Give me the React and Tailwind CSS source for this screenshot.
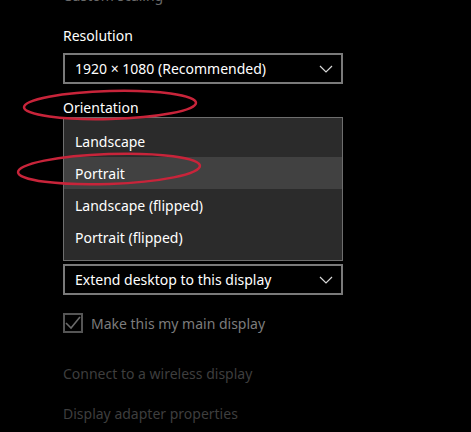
const FONT = { fontFamily: '"Segoe UI", "Noto Sans", "Open Sans", sans-serif' }

const ORIENTATIONS = ['Landscape', 'Portrait', 'Landscape (flipped)', 'Portrait (flipped)']

function Chevron() {
  return (
    <svg width="14" height="8" viewBox="0 0 14 8" fill="none" className="shrink-0">
      <path d="M1 1 L7 7 L13 1" stroke="#d8d8d8" strokeWidth="1.2" />
    </svg>
  )
}

function Select({ value }) {
  return (
    <div className="flex h-[31px] w-[280px] items-center justify-between border-2 border-[#7a7a7a] pl-[10px] pr-[8px]">
      <span className="text-[14px] text-white">{value}</span>
      <Chevron />
    </div>
  )
}

export default function App() {
  return (
    <div className="relative h-[432px] w-[471px] overflow-hidden bg-black" style={FONT}>
      <div className="flex flex-col pl-[63px]">
        {/* cut-off label at the very top */}
        <div className="mt-[-14px] h-[20px] text-[14px] leading-[20px] text-[#6a6a6a]">Custom scaling</div>

        <div className="mt-[20px] h-[20px] text-[14px] leading-[20px] text-white">Resolution</div>
        <div className="mt-[7px]">
          <Select value="1920 × 1080 (Recommended)" />
        </div>

        <div className="mt-[14px] h-[19px] text-[14px] leading-[20px] text-white">Orientation</div>

        {/* open dropdown list */}
        <div className="w-[280px] border border-[#6e6e6e] bg-[#2b2b2b] py-[7px]">
          {ORIENTATIONS.map((o) => (
            <div
              key={o}
              className={`flex h-[32px] items-center pl-[11px] text-[14px] text-white ${o === 'Portrait' ? 'bg-[#414141]' : ''}`}
            >
              {o}
            </div>
          ))}
        </div>

        <div className="mt-[3px]">
          <Select value="Extend desktop to this display" />
        </div>

        <div className="mt-[18px] flex h-[20px] items-center gap-[8px]">
          <div className="flex h-[20px] w-[20px] items-center justify-center border-2 border-[#555]">
            <svg width="16" height="14" viewBox="0 0 16 14" fill="none">
              <path d="M1 7 L6 12 L15 1" stroke="#6a6a6a" strokeWidth="1.6" />
            </svg>
          </div>
          <span className="text-[14px] text-[#7c7c7c]">Make this my main display</span>
        </div>

        <div className="mt-[31px] h-[20px] text-[14px] leading-[20px] text-[#3e3e3e]">Connect to a wireless display</div>
        <div className="mt-[20px] h-[20px] text-[14px] leading-[20px] text-[#3e3e3e]">Display adapter properties</div>
      </div>

      {/* red hand-drawn annotation rings */}
      <svg className="pointer-events-none absolute left-0 top-0" width="471" height="432" viewBox="0 0 471 432" fill="none">
        <ellipse cx="110" cy="105" rx="86" ry="14" transform="rotate(-1.5 110 105)" stroke="#c8243a" strokeWidth="2.5" />
        <ellipse cx="109" cy="169" rx="91" ry="15" transform="rotate(-2 109 169)" stroke="#c8243a" strokeWidth="2.5" />
      </svg>
    </div>
  )
}
